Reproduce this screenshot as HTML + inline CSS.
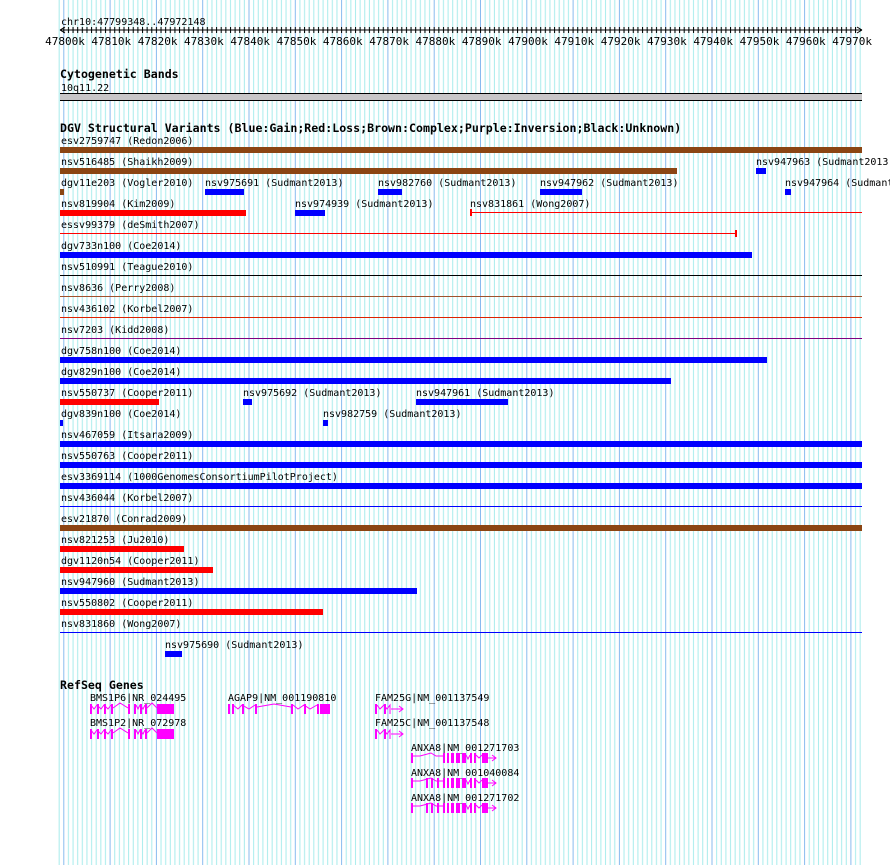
<!DOCTYPE html>
<html><head><meta charset="utf-8"><style>
html,body{margin:0;padding:0;background:#fff;width:890px;height:865px;overflow:hidden}
svg{display:block}
text{font-family:"DejaVu Sans Mono","Liberation Mono",monospace;font-size:10px;fill:#000}
.b{font-weight:bold;font-size:11.6px}
.r{font-size:11px}
</style></head><body>
<svg width="890" height="865" viewBox="0 0 890 865" xmlns="http://www.w3.org/2000/svg">
<defs>
<pattern id="g" x="63.3" y="0" width="46.3" height="865" patternUnits="userSpaceOnUse">
<rect x="0" y="0" width="1" height="865" fill="#88bbee"/>
<rect x="4.63" width="1" height="865" fill="#a8ecec"/>
<rect x="9.26" width="1" height="865" fill="#a8ecec"/>
<rect x="13.89" width="1" height="865" fill="#a8ecec"/>
<rect x="18.52" width="1" height="865" fill="#a8ecec"/>
<rect x="23.15" width="1" height="865" fill="#a8ecec"/>
<rect x="27.78" width="1" height="865" fill="#a8ecec"/>
<rect x="32.41" width="1" height="865" fill="#a8ecec"/>
<rect x="37.04" width="1" height="865" fill="#a8ecec"/>
<rect x="41.67" width="1" height="865" fill="#a8ecec"/>
</pattern>
<pattern id="t" x="63.3" y="0" width="4.63" height="10" patternUnits="userSpaceOnUse">
<rect x="0" y="0" width="1" height="10" fill="#000"/>
</pattern>
</defs>
<rect x="58" y="0" width="804" height="865" fill="url(#g)"/>

<text x="61" y="25">chr10:47799348..47972148</text>
<rect x="60" y="29.5" width="802" height="1" fill="#000"/>
<rect x="62" y="27" width="796" height="6" fill="url(#t)"/>
<path d="M60 30 l5 -3 M60 30 l5 3 M862 30 l-5 -3 M862 30 l-5 3" stroke="#000" fill="none"/>
<g text-anchor="middle">
<text class="r" x="65" y="45">47800k</text><text class="r" x="111.3" y="45">47810k</text><text class="r" x="157.6" y="45">47820k</text><text class="r" x="203.9" y="45">47830k</text><text class="r" x="250.2" y="45">47840k</text><text class="r" x="296.5" y="45">47850k</text><text class="r" x="342.8" y="45">47860k</text><text class="r" x="389.1" y="45">47870k</text><text class="r" x="435.4" y="45">47880k</text><text class="r" x="481.7" y="45">47890k</text><text class="r" x="528" y="45">47900k</text><text class="r" x="574.3" y="45">47910k</text><text class="r" x="620.6" y="45">47920k</text><text class="r" x="666.9" y="45">47930k</text><text class="r" x="713.2" y="45">47940k</text><text class="r" x="759.5" y="45">47950k</text><text class="r" x="805.8" y="45">47960k</text><text class="r" x="852.1" y="45">47970k</text>
</g>

<text class="b" x="60" y="78">Cytogenetic Bands</text>
<text x="61" y="91">10q11.22</text>
<rect x="60" y="93" width="802" height="8" fill="#c8c6c8"/>
<rect x="60" y="93" width="802" height="1" fill="#000"/>
<rect x="60" y="100" width="802" height="1" fill="#000"/>

<text class="b" x="60" y="132">DGV Structural Variants (Blue:Gain;Red:Loss;Brown:Complex;Purple:Inversion;Black:Unknown)</text>
<g>
<text x="61" y="144">esv2759747 (Redon2006)</text>
<rect x="60" y="147" width="802" height="6" fill="#8b4513"/>
<text x="61" y="165">nsv516485 (Shaikh2009)</text>
<rect x="60" y="168" width="617" height="6" fill="#8b4513"/>
<text x="756" y="165">nsv947963 (Sudmant2013)</text>
<rect x="756" y="168" width="10" height="6" fill="#0000ff"/>
<text x="61" y="186">dgv11e203 (Vogler2010)</text>
<rect x="60" y="189" width="4" height="6" fill="#8b4513"/>
<text x="205" y="186">nsv975691 (Sudmant2013)</text>
<rect x="205" y="189" width="39" height="6" fill="#0000ff"/>
<text x="378" y="186">nsv982760 (Sudmant2013)</text>
<rect x="378" y="189" width="24" height="6" fill="#0000ff"/>
<text x="540" y="186">nsv947962 (Sudmant2013)</text>
<rect x="540" y="189" width="42" height="6" fill="#0000ff"/>
<text x="785" y="186">nsv947964 (Sudmant2013)</text>
<rect x="785" y="189" width="6" height="6" fill="#0000ff"/>
<text x="61" y="207">nsv819904 (Kim2009)</text>
<rect x="60" y="210" width="186" height="6" fill="#ff0000"/>
<text x="295" y="207">nsv974939 (Sudmant2013)</text>
<rect x="295" y="210" width="30" height="6" fill="#0000ff"/>
<text x="470" y="207">nsv831861 (Wong2007)</text>
<rect x="470" y="212" width="392" height="1" fill="#ff0000"/>
<rect x="470" y="209" width="2" height="7" fill="#ff0000"/>
<text x="61" y="228">essv99379 (deSmith2007)</text>
<rect x="60" y="233" width="676" height="1" fill="#ff0000"/>
<rect x="735" y="230" width="2" height="7" fill="#ff0000"/>
<text x="61" y="249">dgv733n100 (Coe2014)</text>
<rect x="60" y="252" width="692" height="6" fill="#0000ff"/>
<text x="61" y="270">nsv510991 (Teague2010)</text>
<rect x="60" y="275" width="802" height="1" fill="#000"/>
<text x="61" y="291">nsv8636 (Perry2008)</text>
<rect x="60" y="296" width="802" height="1" fill="#a0522d"/>
<text x="61" y="312">nsv436102 (Korbel2007)</text>
<rect x="60" y="317" width="802" height="1" fill="#dd2200"/>
<text x="61" y="333">nsv7203 (Kidd2008)</text>
<rect x="60" y="338" width="802" height="1" fill="#800080"/>
<text x="61" y="354">dgv758n100 (Coe2014)</text>
<rect x="60" y="357" width="707" height="6" fill="#0000ff"/>
<text x="61" y="375">dgv829n100 (Coe2014)</text>
<rect x="60" y="378" width="611" height="6" fill="#0000ff"/>
<text x="61" y="396">nsv550737 (Cooper2011)</text>
<rect x="60" y="399" width="99" height="6" fill="#ff0000"/>
<text x="243" y="396">nsv975692 (Sudmant2013)</text>
<rect x="243" y="399" width="9" height="6" fill="#0000ff"/>
<text x="416" y="396">nsv947961 (Sudmant2013)</text>
<rect x="416" y="399" width="92" height="6" fill="#0000ff"/>
<text x="61" y="417">dgv839n100 (Coe2014)</text>
<rect x="60" y="420" width="3" height="6" fill="#0000ff"/>
<text x="323" y="417">nsv982759 (Sudmant2013)</text>
<rect x="323" y="420" width="5" height="6" fill="#0000ff"/>
<text x="61" y="438">nsv467059 (Itsara2009)</text>
<rect x="60" y="441" width="802" height="6" fill="#0000ff"/>
<text x="61" y="459">nsv550763 (Cooper2011)</text>
<rect x="60" y="462" width="802" height="6" fill="#0000ff"/>
<text x="61" y="480">esv3369114 (1000GenomesConsortiumPilotProject)</text>
<rect x="60" y="483" width="802" height="6" fill="#0000ff"/>
<text x="61" y="501">nsv436044 (Korbel2007)</text>
<rect x="60" y="506" width="802" height="1" fill="#0000ff"/>
<text x="61" y="522">esv21870 (Conrad2009)</text>
<rect x="60" y="525" width="802" height="6" fill="#8b4513"/>
<text x="61" y="543">nsv821253 (Ju2010)</text>
<rect x="60" y="546" width="124" height="6" fill="#ff0000"/>
<text x="61" y="564">dgv1120n54 (Cooper2011)</text>
<rect x="60" y="567" width="153" height="6" fill="#ff0000"/>
<text x="61" y="585">nsv947960 (Sudmant2013)</text>
<rect x="60" y="588" width="357" height="6" fill="#0000ff"/>
<text x="61" y="606">nsv550802 (Cooper2011)</text>
<rect x="60" y="609" width="263" height="6" fill="#ff0000"/>
<text x="61" y="627">nsv831860 (Wong2007)</text>
<rect x="60" y="632" width="802" height="1" fill="#0000ff"/>
<text x="165" y="648">nsv975690 (Sudmant2013)</text>
<rect x="165" y="651" width="17" height="6" fill="#0000ff"/>
</g>

<text class="b" x="60" y="689">RefSeq Genes</text>
<text x="90" y="701">BMS1P6|NR_024495</text>
<text x="90" y="726">BMS1P2|NR_072978</text>
<text x="228" y="701">AGAP9|NM_001190810</text>
<text x="375" y="701">FAM25G|NM_001137549</text>
<text x="375" y="726">FAM25C|NM_001137548</text>
<text x="411" y="751">ANXA8|NM_001271703</text>
<text x="411" y="776">ANXA8|NM_001040084</text>
<text x="411" y="801">ANXA8|NM_001271702</text>
<g fill="#ff00ff" stroke="none">
<g id="bms">
<rect x="90" y="704" width="2" height="10"/><rect x="97" y="704" width="2" height="10"/><rect x="104" y="704" width="2" height="10"/><rect x="111" y="704" width="2" height="10"/>
<rect x="128" y="704" width="2" height="10"/><rect x="134" y="704" width="2" height="10"/><rect x="140" y="704" width="2" height="10"/><rect x="145" y="704" width="2" height="10"/>
<rect x="157" y="704" width="17" height="10"/>
<path d="M91 705 L94 709 L97 705 L101 709 L104 705 L108 709 L111 705 M113 708 L120 703 L128 708 M136 705 L138 709 L140 705 L143 709 L145 705 M147 708 L152 703 L157 708" stroke="#ff00ff" fill="none"/>
</g>
<use href="#bms" y="25"/>
<rect x="228" y="704" width="2" height="10"/><rect x="232" y="704" width="2" height="10"/><rect x="242" y="704" width="2" height="10"/><rect x="255" y="704" width="2" height="10"/>
<rect x="291" y="704" width="2" height="10"/><rect x="304" y="704" width="2" height="10"/><rect x="317" y="704" width="2" height="10"/><rect x="320" y="704" width="10" height="10"/>
<path d="M233 705 L238 709 L242 705 L249 709 L255 705 M257 707 L274 704 L291 707 M293 705 L298 709 L304 705 L310 709 L317 705" stroke="#ff00ff" fill="none"/>
<g id="fam">
<rect x="375" y="704" width="2" height="10"/><rect x="384" y="704" width="2" height="10"/>
<path d="M377 705 L380 709 L384 705 L387 709 L390 705 L390 714 M391 709 L403 709 M399 706 L403 709 L399 712" stroke="#ff00ff" fill="none"/>
</g>
<use href="#fam" y="25"/>
<g id="anx">
<rect x="411" y="753" width="2" height="10"/>
<rect x="443" y="753" width="2" height="10"/><rect x="447" y="753" width="2" height="10"/><rect x="451" y="753" width="3" height="10"/><rect x="456" y="753" width="4" height="10"/><rect x="462" y="753" width="4" height="10"/>
<rect x="470" y="753" width="2" height="10"/><rect x="474" y="753" width="2" height="10"/>
<rect x="482" y="753" width="6" height="10"/>
<path d="M413 756 L420 756 L431 753 L436 756 L443 756 M466 755 L468 759 L470 755 M476 755 L479 758 L482 755 M488 758 L496 758 M492 755 L496 758 L492 761" stroke="#ff00ff" fill="none"/>
</g>
<use href="#anx" y="25"/>
<use href="#anx" y="50"/>
<rect x="426" y="778" width="2" height="10"/><rect x="431" y="778" width="2" height="10"/><rect x="437" y="778" width="2" height="10"/>
<rect x="426" y="803" width="2" height="10"/><rect x="431" y="803" width="2" height="10"/><rect x="437" y="803" width="2" height="10"/>
</g>
</svg>
</body></html>
